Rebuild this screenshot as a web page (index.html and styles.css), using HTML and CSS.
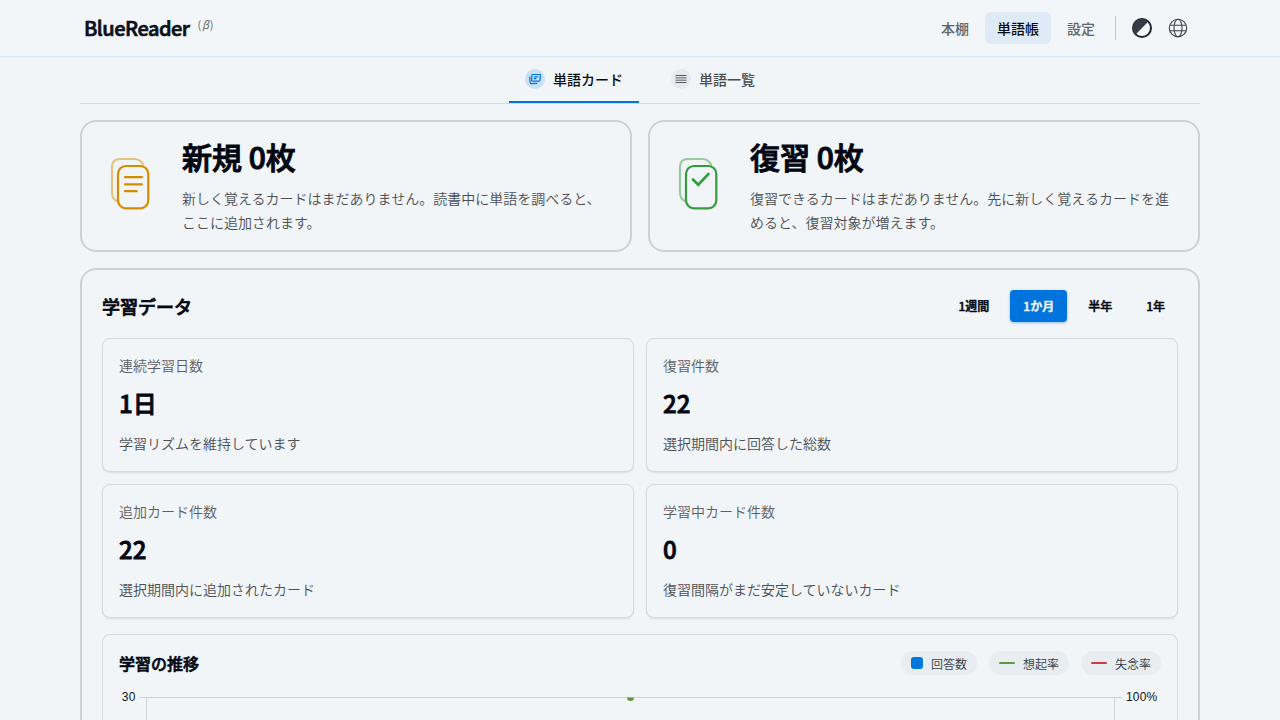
FILE: index.html
```html
<!DOCTYPE html>
<html lang="ja">
<head>
<meta charset="utf-8">
<title>BlueReader</title>
<link rel="stylesheet" href="styles.css">
</head>
<body>
<header class="header">
  <div class="header-inner">
    <div class="logo">BlueReader<span class="beta">(<i>β</i>)</span></div>
    <nav class="nav">
      <a class="nav-link">本棚</a>
      <a class="nav-link nav-active">単語帳</a>
      <a class="nav-link">設定</a>
      <span class="divider"></span>
      <svg class="theme-icon" width="20" height="20" viewBox="0 0 20 20"><circle cx="10" cy="10" r="9" fill="none" stroke="#20262e" stroke-width="2"/><path d="M3.6 16.4A9 9 0 0 1 16.4 3.6Z" fill="#343b46"/></svg>
      <svg class="globe-icon" width="20" height="20" viewBox="0 0 20 20" fill="none" stroke="#3b424b" stroke-width="1.1"><circle cx="10" cy="10" r="8.7"/><ellipse cx="10" cy="10" rx="4" ry="8.7"/><path d="M1.9 7.2h16.2M1.9 12.8h16.2"/></svg>
    </nav>
  </div>
</header>
<main class="main">
  <div class="tabs">
    <div class="tab tab-active"><span class="tab-icon"><svg width="14" height="14" viewBox="0 0 14 14" fill="none" stroke="#0074de" stroke-width="1.2"><path d="M4.400 2.500h7.600q.6 0 .5.700l-.6 5.200q-.1.700-.8.700H4.200q-.7 0-.6-.7l.4-5.200q.1-.7.4-.7z"/><path d="M6 4.800h4.200M5.800 6.600h2.400M1.700 4.600 2.100 10.500q.1 1.100 1.200 1.100l6-.2"/></svg></span>単語カード</div>
    <div class="tab"><span class="tab-icon"><svg width="12" height="12" viewBox="0 0 12 12"><path d="M.5 2.5h11M.5 9.500h11" stroke="#555b63"/><path d="M.5 4.700h11M.5 7.300h11" stroke="#858b91" stroke-width="1.4"/></svg></span>単語一覧</div>
  </div>
  <div class="decks">
    <section class="deck">
      <svg class="deck-icon new" width="56" height="56" viewBox="0 0 56 56" fill="none" stroke="currentColor" stroke-width="2.2" stroke-linecap="round"><path class="back" d="M8.500 45Q4 42.500 4 36V11Q4 3 12 3H26Q33 3 35 9"/><rect x="10" y="10" width="30.300" height="42.300" rx="8"/><path d="M17 21.200h17M17 28.300h17M17 35.200h11.700"/></svg>
      <div class="deck-body"><h2 class="deck-title">新規 0枚</h2><p class="deck-text">新しく覚えるカードはまだありません。読書中に単語を調べると、ここに追加されます。</p></div>
    </section>
    <section class="deck">
      <svg class="deck-icon review" width="56" height="56" viewBox="0 0 56 56" fill="none" stroke="currentColor" stroke-width="2.2" stroke-linecap="round"><path class="back" d="M8.500 45Q4 42.500 4 36V11Q4 3 12 3H26Q33 3 35 9"/><rect x="10" y="10" width="30.300" height="42.300" rx="8"/><path d="M17 23.500l5.300 5.200L32.500 17.900" stroke-width="2.700"/></svg>
      <div class="deck-body"><h2 class="deck-title">復習 0枚</h2><p class="deck-text">復習できるカードはまだありません。先に新しく覚えるカードを進めると、復習対象が増えます。</p></div>
    </section>
  </div>
  <section class="data">
    <div class="data-head">
      <h2 class="data-title">学習データ</h2>
      <div class="periods"><button class="period">1週間</button><button class="period period-active">1か月</button><button class="period">半年</button><button class="period">1年</button></div>
    </div>
    <div class="stats">
      <div class="stat"><div class="stat-label">連続学習日数</div><div class="stat-value">1日</div><div class="stat-note">学習リズムを維持しています</div></div>
      <div class="stat"><div class="stat-label">復習件数</div><div class="stat-value">22</div><div class="stat-note">選択期間内に回答した総数</div></div>
      <div class="stat"><div class="stat-label">追加カード件数</div><div class="stat-value">22</div><div class="stat-note">選択期間内に追加されたカード</div></div>
      <div class="stat"><div class="stat-label">学習中カード件数</div><div class="stat-value">0</div><div class="stat-note">復習間隔がまだ安定していないカード</div></div>
    </div>
    <div class="trend">
      <div class="trend-head">
        <h3 class="trend-title">学習の推移</h3>
        <div class="legend">
          <span class="key"><i class="swatch"></i>回答数</span>
          <span class="key"><i class="line recall"></i>想起率</span>
          <span class="key"><i class="line forget"></i>失念率</span>
        </div>
      </div>
      <svg class="chart" width="1042" height="33" viewBox="0 0 1042 33">
        <path d="M20 10.500H1003M27.500 10.500V33M995.500 10.500V33" stroke="#d0d5da" fill="none"/>
        <path d="M508 10.500a3.500 3.500 0 0 0 7 0z" fill="#5f9b3d"/>
        <text x="16.500" y="14" text-anchor="end">30</text>
        <text x="1007" y="14">100%</text>
      </svg>
    </div>
  </section>
</main>
</body>
</html>
```

FILE: styles.css
```css
* { box-sizing: border-box; }
body { margin: 0; height: 720px; overflow: hidden; background: #f1f5f8; color: #030712; font-family: "Noto Sans CJK JP", sans-serif; font-size: 14px; }
h2, h3, p { margin: 0; }
.header { height: 57px; border-bottom: 1px solid #d5e5f3; background: #f2f6f9; }
.header-inner { display: flex; justify-content: space-between; align-items: center; width: 1120px; height: 56px; margin: 0 auto; padding: 0 10px 0 4px; }
.logo { display: flex; align-items: flex-start; font-size: 20px; font-weight: 500; -webkit-text-stroke: 0.7px; letter-spacing: -0.5px; line-height: 28px; color: #0b1118; }
.beta { margin: 1px 0 0 8px; font-size: 11px; font-weight: 400; -webkit-text-stroke: 0; line-height: 18px; letter-spacing: 0.8px; color: #65696e; }
.nav { display: flex; align-items: center; }
.nav-link { height: 32px; padding: 0 12px; margin-right: 4px; border-radius: 6px; line-height: 32px; font-weight: 500; color: #606469; }
.nav-active { background: #deebf7; color: #050b13; }
.divider { width: 1px; height: 24px; margin: 0 16px 0 4px; background: #c3c8cd; }
.theme-icon { margin-right: 16px; }
.globe-icon { margin-right: 2px; }
.main { width: 1120px; margin: 0 auto; }
.tabs { display: flex; justify-content: center; gap: 16px; height: 47px; margin-bottom: 16px; border-bottom: 1px solid #d3dae1; }
.tab { display: flex; align-items: center; gap: 8px; height: 46px; padding: 0 16px; border-bottom: 2px solid transparent; font-weight: 500; color: #484c51; }
.tab-active { border-color: #0074de; color: #050b13; }
.tab-icon { display: flex; align-items: center; justify-content: center; width: 20px; height: 20px; border-radius: 50%; background: #e5eaee; }
.tab-active .tab-icon { background: #c9e0f5; }
.decks { display: grid; grid-template-columns: 1fr 1fr; gap: 16px; margin-bottom: 16px; }
.deck { display: flex; align-items: center; height: 132px; padding: 16px 24px; border: 2px solid #cdd2d6; border-radius: 16px; }
.deck-icon { flex: none; margin: 0 18px 4px 2px; }
.new { color: #d58b00; }
.review { color: #349b3e; }
.back { opacity: .48; }
.deck-title { margin-bottom: 12px; font-size: 30px; font-weight: 500; -webkit-text-stroke: 1px; line-height: 36px; }
.deck-text { width: 422px; font-weight: 350; line-height: 24px; color: #4b4e52; }
.data { height: 452px; padding: 20px 20px 0; border: 2px solid #cdd2d6; border-bottom: 0; border-radius: 16px 16px 0 0; }
.data-head { display: flex; justify-content: space-between; align-items: center; height: 32px; margin-bottom: 16px; }
.data-title { font-size: 18px; font-weight: 500; -webkit-text-stroke: 0.7px; line-height: 28px; }
.periods { display: flex; gap: 8px; }
.period { height: 32px; padding: 0 13px; border: 0; border-radius: 4px; background: transparent; color: #030712; font: 500 12px/32px "Noto Sans CJK JP", sans-serif; -webkit-text-stroke: 0.5px; }
.period-active { background: #0073dc; color: #f2f7fb; box-shadow: 0 1px 3px #0073dc66; }
.stats { display: grid; grid-template-columns: 1fr 1fr; gap: 12px; margin-bottom: 16px; }
.stat { height: 134px; padding: 16px; border: 1px solid #d5dade; border-radius: 8px; box-shadow: 0 1px 2px #00000018; background: #f1f5f8; }
.stat-label { font-weight: 350; line-height: 20px; color: #5b5e62; }
.stat-value { margin: 12px 0; font-size: 24px; font-weight: 500; -webkit-text-stroke: 0.8px; line-height: 32px; }
.stat-note { font-weight: 350; line-height: 24px; color: #4b4e52; }
.trend { height: 86px; padding: 16px 16px 0; border: 1px solid #d5dade; border-bottom: 0; border-radius: 8px 8px 0 0; background: #f1f5f8; }
.trend-head { display: flex; justify-content: space-between; align-items: center; height: 24px; margin-bottom: 12px; }
.trend-title { font-size: 16px; font-weight: 500; -webkit-text-stroke: 0.6px; line-height: 24px; }
.legend { display: flex; gap: 12px; }
.key { display: flex; align-items: center; gap: 8px; height: 24px; padding: 0 10px; border-radius: 12px; background: #e8edf1; font-size: 12px; font-weight: 350; color: #383b3f; }
.swatch { width: 12px; height: 12px; border-radius: 3px; background: #0077db; }
.line { width: 16px; height: 2px; border-radius: 1px; }
.recall { background: #5f9b3d; }
.forget { background: #cc3d45; }
.chart { display: block; }
.chart text { font: 12px "Liberation Sans", sans-serif; letter-spacing: .15px; fill: #11161c; }
```
